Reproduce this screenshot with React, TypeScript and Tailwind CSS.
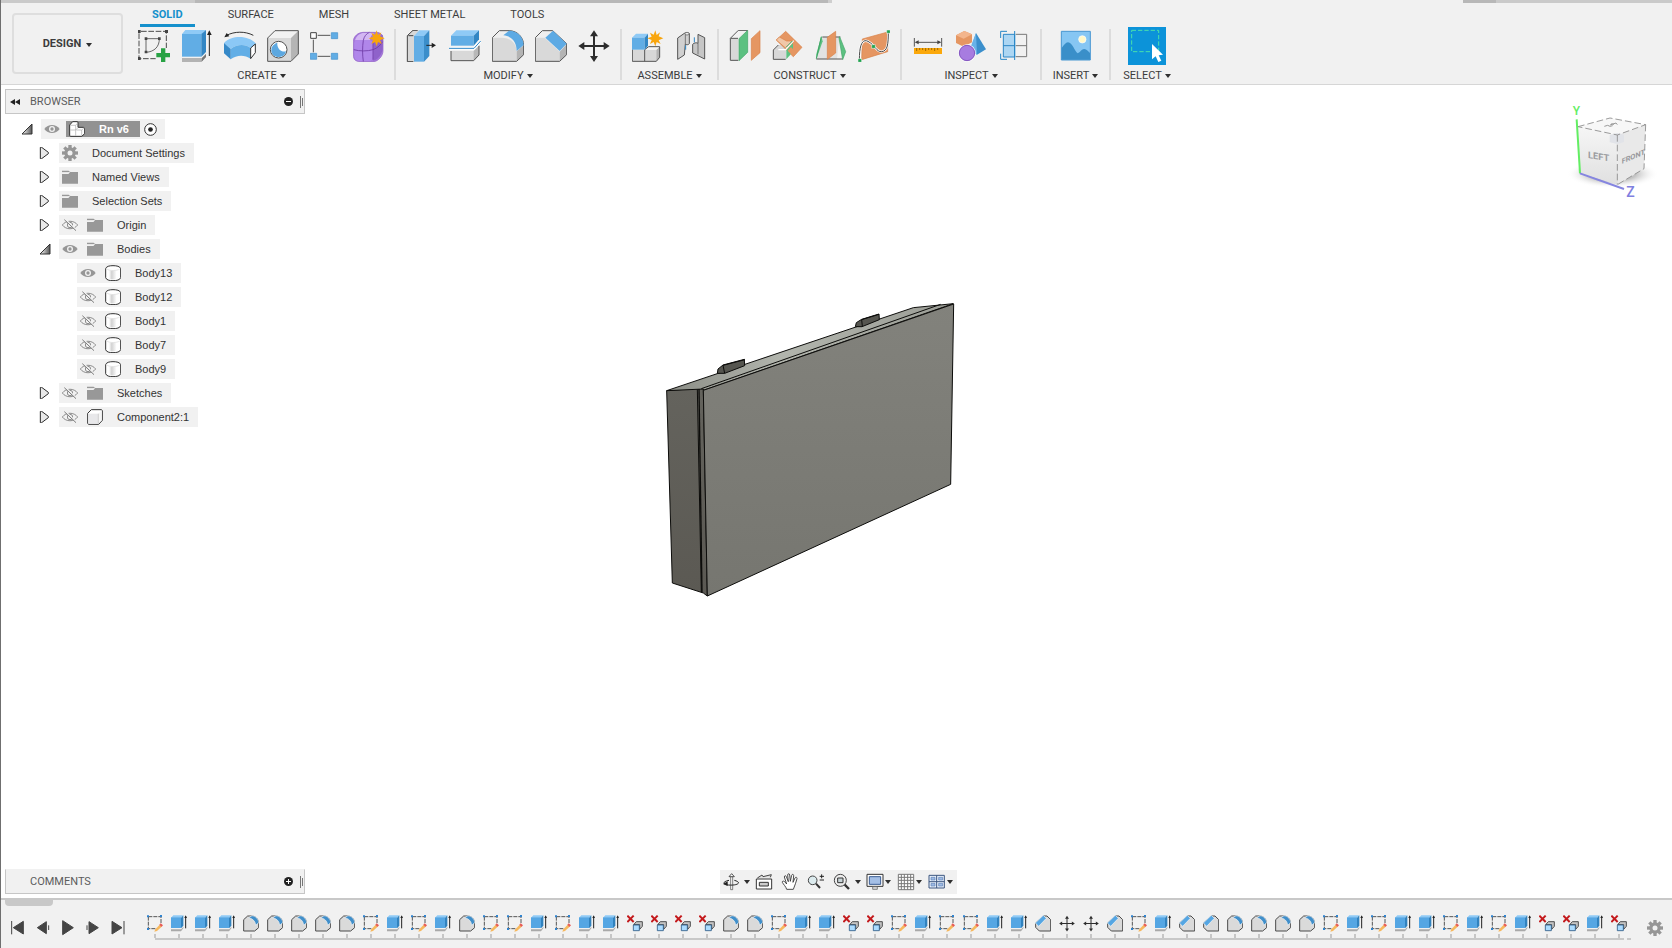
import React from 'react';

type IconProps = { children: React.ReactNode; box: string; className?: string };

function Drawing({ children, box, className = 'h-8 w-8' }: IconProps) {
  return (
    <svg viewBox={box} className={`block shrink-0 ${className}`} fill="none" aria-hidden="true">
      {children}
    </svg>
  );
}

function Caret() {
  return (
    <svg viewBox="0 0 6 4" className="block h-1 w-1.5 shrink-0" aria-hidden="true">
      <path d="M0 0h6L3 4z" fill="#2f2f2f" />
    </svg>
  );
}

const STAR = 'M0-24 4-10 14-18 10-6 24 0 10 6 16 17 4 11 0 24-5 11-16 17-11 5-24 0-11-5-16-17-5-11z';

/* ---------- ribbon icons ---------- */

const SketchIcon = () => (
  <Drawing box="414 90 96 96">
    <path d="M417 94h82v50M417 94v82h50" stroke="#4a4a4a" strokeWidth="3" strokeDasharray="17 5" strokeDashoffset="-6" />
    <path d="M438 157V116h40c0 24-14 39-40 41" stroke="#4a4a4a" strokeWidth="2.5" />
    <path d="M413 90h9v9h-9zM495 90h9v9h-9zM413 171h9v9h-9zM434 112h8v8h-8zM474 112h8v8h-8zM434 152h8v8h-8z" fill="#444" />
    <path d="M483 145h13v14h14v13h-14v14h-13v-14h-14v-13h14z" fill="#27a243" />
  </Drawing>
);

const ExtrudeIcon = () => (
  <Drawing box="543 90 96 96">
    <path d="M546 102 556 90h62l-13 12z" fill="#8fcaf6" />
    <path d="M546 102h58v68h-58z" fill="#61ade5" />
    <path d="M604 102l14-12v66l-14 14z" fill="#3286c4" />
    <path d="M546 174h60l12-12v9l-14 15h-58z" fill="#b3b3b3" />
    <path d="M606 174l12-12v9l-13 14z" fill="#777" />
    <path d="M628 168V100" stroke="#222" strokeWidth="3" />
    <path d="M621 105l7-14 7 14z" fill="#222" />
  </Drawing>
);

const RevolveIcon = () => (
  <Drawing box="672 90 96 96">
    <path d="M672 129C695 105 745 105 768 131L752 144C737 132 710 132 692 147z" fill="#8bc8f6" />
    <path d="M692 147c18-15 45-15 60-3v32c-18-12-42-12-60 2z" fill="#62aee6" />
    <path d="M672 129l20 18v31l-20-18z" fill="#3689c8" />
    <path d="M752 144l14-12v26l-14 18z" fill="#fff" stroke="#333" strokeWidth="3" />
    <path d="M760 106C735 93 703 94 680 106" stroke="#333" strokeWidth="3" />
    <path d="M673 112l7-13 8 10z" fill="#222" />
  </Drawing>
);

const HoleIcon = () => (
  <Drawing box="801 90 96 96">
    <path d="M803 114l22-22h70l-22 22z" fill="#f2f2f2" />
    <path d="M803 114h70v70h-70z" fill="#d9d9d9" />
    <path d="M873 114l22-22v70l-22 22z" fill="#b5b5b5" />
    <path d="M803 114l22-22h70v70l-22 22h-70z" stroke="#555" strokeWidth="3" />
    <circle cx="836" cy="149" r="25" fill="#fff" stroke="#505050" strokeWidth="3" />
    <path d="M832 128c-26 8-23 43 5 43 14 0 20-10 21-17-13 4-28-8-26-26z" fill="#5da8e0" />
  </Drawing>
);

const PatternIcon = () => (
  <Drawing box="930 90 96 96">
    <path d="M953 106h38M940 119v38M953 169h38" stroke="#555" strokeWidth="3" />
    <path d="M932 98h17v17h-17z" fill="#fff" stroke="#444" strokeWidth="3" />
    <path d="M994 98h19v18h-19zM931 160h19v18h-19zM994 160h19v18h-19z" fill="#61ade5" stroke="#4290cb" strokeWidth="2" />
  </Drawing>
);

const FormIcon = () => (
  <Drawing box="1059 90 96 96">
    <path d="M1060 124c0-14 14-27 30-27h38c14 0 21 8 21 20v36c0 14-14 32-30 32h-38c-14 0-21-7-21-20z" fill="#a679dd" />
    <path d="M1066 118c5-12 14-19 26-19h30c-8 6-12 13-12 22h-45z" fill="#d3b7f2" />
    <path d="M1120 122l28-18v42c-2 18-14 32-28 36z" fill="#8f62ca" />
    <path d="M1063 130c0-6 4-9 10-9h36c6 0 10 4 10 10v40c0 7-4 12-11 12h-33c-8 0-12-4-12-12z" fill="#b086ea" />
    <path d="M1061 149c18 5 42 5 58 0 14-5 23-14 29-24M1090 121c-3 20-3 42 0 64M1090 121c2-11 9-20 18-24M1119 125v54" stroke="#6d3aa5" strokeWidth="2.5" />
    <path d="M1060 124c0-14 14-27 30-27h38c14 0 21 8 21 20v36c0 14-14 32-30 32h-38c-14 0-21-7-21-20z" stroke="#9160c6" strokeWidth="2" />
    <path d={STAR} transform="translate(1130 115)" fill="#f8a50d" />
  </Drawing>
);

const PressPullIcon = () => (
  <Drawing box="51 90 96 96">
    <path d="M55 107l17-16h22L77 107v78H55z" fill="#d8d8d8" />
    <path d="M86 91H72L55 107v78h18M58 107h15" stroke="#444" strokeWidth="3" />
    <path d="M75 108l16-17h30l-16 17z" fill="#8fcaf6" />
    <path d="M75 108h30v77H75z" fill="#61ade5" />
    <path d="M105 108l16-17v77l-16 17z" fill="#3b8eca" />
    <path d="M112 136h20" stroke="#222" strokeWidth="3" />
    <path d="M128 128l13 8-13 8z" fill="#222" />
  </Drawing>
);

const SplitIcon = () => (
  <Drawing box="180 90 96 96">
    <path d="M186 107l16-16h68l-16 16z" fill="#8fcaf6" />
    <path d="M186 107h68v30h-68z" fill="#61ade5" />
    <path d="M254 107l16-16v27l-16 19z" fill="#3286c4" />
    <path d="M186 153h68l16-16v28l-16 17h-68z" fill="#d8d8d8" />
    <path d="M254 153l16-16v28l-16 17z" fill="#b8b8b8" />
    <path d="M186 153v29h68l16-17v-28" stroke="#555" strokeWidth="3" />
    <path d="M181 145h74l20-22" stroke="#fff" strokeWidth="9" />
    <path d="M180 145h75l20-22" stroke="#2d86c6" strokeWidth="3" />
  </Drawing>
);

const FilletIcon = () => (
  <Drawing box="309 90 96 96">
    <path d="M310 113l21-21h29c26 0 44 21 44 44v28l-21 20h-73z" fill="#efefef" />
    <path d="M310 113h29c26 0 44 18 44 41v30h-73z" fill="#d9d9d9" />
    <path d="M383 154l21-18v28l-21 20z" fill="#b4b4b4" />
    <path d="M310 113l21-21h29c26 0 44 21 44 44v28l-21 20h-73z" stroke="#555" strokeWidth="3" />
    <path d="M343 106l17-14c28 0 44 22 44 43l-21 18c0-26-13-44-40-47z" fill="#5daae4" />
  </Drawing>
);

const ChamferIcon = () => (
  <Drawing box="438 90 96 96">
    <path d="M439 113l21-21h31l42 39v33l-21 20h-73z" fill="#efefef" />
    <path d="M439 113h28l45 42v29h-73z" fill="#d9d9d9" />
    <path d="M512 155l21-22v31l-21 20z" fill="#b4b4b4" />
    <path d="M439 113l21-21h31l42 39v33l-21 20h-73z" stroke="#555" strokeWidth="3" />
    <path d="M469 113l23-21 41 39-21 22z" fill="#5daae4" />
  </Drawing>
);

function MoveIcon({ className = 'h-8 w-8' }: { className?: string }) {
  return (
    <Drawing box="567 90 96 96" className={className}>
      <path d="M615 105v68M581 138h68" stroke="#2c2c2c" strokeWidth="6" />
      <path d="M603 109l12-18 12 18zM603 168l12 18 12-18zM586 126l-18 12 18 12zM644 126l18 12-18 12z" fill="#2c2c2c" />
    </Drawing>
  );
}

const NewComponentIcon = () => (
  <Drawing box="729 90 96 96">
    <path d="M730 149h36v35h-36zM768 149h34v35h-34z" fill="#d8d8d8" />
    <path d="M802 149l10-10v33l-10 12z" fill="#b4b4b4" />
    <path d="M768 149l10-9h34l-10 9z" fill="#f4f4f4" />
    <path d="M730 148v36h72l10-12v-32h-33l-12 9v35" stroke="#555" strokeWidth="3" />
    <path d="M729 113l12-12h36l-10 12z" fill="#8fcaf6" />
    <path d="M729 113h38v36h-38z" fill="#61ade5" />
    <path d="M767 113l10-12v36l-10 12z" fill="#3286c4" />
    <path d={STAR} transform="translate(799 115)" fill="#f8a50d" />
  </Drawing>
);

const JointIcon = () => (
  <Drawing box="858 90 96 96">
    <path d="M866 114l20-14c6-4 15-3 15 2v29c-3 4-9 4-12 1l-3 33-20 13z" fill="#d0d0d0" stroke="#555" strokeWidth="3" />
    <path d="M889 101v31" stroke="#777" strokeWidth="3" />
    <ellipse cx="894" cy="101" rx="6" ry="4" fill="#eee" stroke="#555" strokeWidth="2" />
    <path d="M947 113l-20-10v27c-4-3-12-2-16 3v26l36 18z" fill="#c6c6c6" stroke="#555" strokeWidth="3" />
    <path d="M927 130v33" stroke="#777" strokeWidth="3" />
    <path d="M890 149v-13M916 127v-15" stroke="#2d86c6" strokeWidth="3" />
  </Drawing>
);

const OffsetPlaneIcon = () => (
  <Drawing box="1020 90 96 96">
    <path d="M1024 115h24v66h-24z" fill="#d8d8d8" />
    <path d="M1024 115l24-24h26l-24 24z" fill="#f1f1f1" />
    <path d="M1048 181h-24v-66l24-24h28M1025 115h22" stroke="#555" strokeWidth="3" />
    <path d="M1050 116l26-25v66l-26 25z" fill="#5cc181" stroke="#3fa565" strokeWidth="2" />
    <path d="M1087 116l26-24v66l-26 23z" fill="#e59662" stroke="#d98047" strokeWidth="2" />
  </Drawing>
);

const AnglePlaneIcon = () => (
  <Drawing box="-21 90 96 96">
    <path d="M-17 150l16-15h22v43h-38z" fill="#d8d8d8" />
    <path d="M20 178h-37v-28l15-15" stroke="#555" strokeWidth="3" />
    <path d="M20 94l49 48-26 28-51-50z" fill="#e59662" stroke="#d98047" strokeWidth="2" />
    <path d="M-8 120l9-9 22 12h19l-20 23z" fill="#f0c7a8" stroke="#d98047" strokeWidth="2" />
    <path d="M22 150l20-21v26l-20 23z" fill="#5cc181" />
    <path d="M-2 149h22l24-27" stroke="#fff" strokeWidth="4" />
    <path d="M21 142l19-19" stroke="#3fa565" strokeWidth="3" />
    <path d="M26 152l17 18 10-11-17-18z" fill="#e59662" />
  </Drawing>
);

const MidPlaneIcon = () => (
  <Drawing box="108 90 96 96">
    <path d="M125 111h56l-7 66h-62z" fill="#e2e2e2" />
    <path d="M130 111h54M112 177h78" stroke="#555" strokeWidth="3" />
    <path d="M127 109l-15 53v16l19-54z" fill="#5cc181" />
    <path d="M127 110l-15 66" stroke="#3fa565" strokeWidth="3" />
    <path d="M182 110l18 45-9 24-11-65z" fill="#5cc181" stroke="#3fa565" strokeWidth="2" />
    <path d="M145 112l25-18v65l-25 19z" fill="#e59662" stroke="#d98047" strokeWidth="2" />
  </Drawing>
);

const TangentPlaneIcon = () => (
  <Drawing box="237 90 96 96">
    <path d="M250 117l76-21v59l-78 24z" fill="#e59662" stroke="#d98047" strokeWidth="2" />
    <path d="M241 181c0-54 12-64 26-57 22 12 25 32 41 31 18-2 20-23 20-60" stroke="#fff" strokeWidth="7" />
    <path d="M241 181c0-54 12-64 26-57 22 12 25 32 41 31 18-2 20-23 20-60" stroke="#4a4a4a" strokeWidth="3" />
    <path d="M237 176h11v11h-11zM278 134h11v11h-11zM323 90h11v10h-11z" fill="#21a350" stroke="#fff" strokeWidth="1.5" />
  </Drawing>
);

const MeasureIcon = () => (
  <Drawing box="399 90 96 96">
    <path d="M406 114v26M488 114v26M412 127h70" stroke="#555" strokeWidth="3" />
    <path d="M407 127l12-6v12zM487 127l-12-6v12z" fill="#444" />
    <path d="M405 144h84v18h-84z" fill="#fba80b" />
    <path d="M413 144v9M422 144v6M431 144v6M440 144v9M449 144v6M458 144v6M467 144v9M476 144v6" stroke="#8d5d00" strokeWidth="2.5" />
  </Drawing>
);

const InterferenceIcon = () => (
  <Drawing box="528 90 96 96">
    <path d="M531 106l25-13 23 10v24l-25 13-23-11z" fill="#e59662" />
    <path d="M531 106l25-13 23 10-25 13z" fill="#f3b58c" />
    <path d="M591 99l30 49-27 16-20-14z" fill="#3b8fcc" />
    <path d="M591 99l3 65-23-13z" fill="#68b2e8" />
    <circle cx="564" cy="159" r="26" fill="#fff" />
    <circle cx="564" cy="159" r="23" fill="#a77ce0" stroke="#8355c0" strokeWidth="3" />
  </Drawing>
);

const SectionIcon = () => (
  <Drawing box="657 90 96 96">
    <path d="M673 103h34v68h-34z" fill="#acd6f3" stroke="#2d86c6" strokeWidth="3" />
    <path d="M673 137h34" stroke="#2d86c6" strokeWidth="3" />
    <path d="M710 103h33v67h-33M710 137h33" stroke="#777" strokeWidth="3" />
    <path d="M684 94h-19v20M665 161v17h19M707 93v87" stroke="#2586c8" strokeWidth="3" />
  </Drawing>
);

const InsertIcon = () => (
  <Drawing box="839 90 96 96">
    <path d="M843 94h87v86h-87z" fill="#86c6f3" stroke="#4897d2" strokeWidth="3" />
    <path d="M844 144c6-7 12-17 19-17 13 0 20 28 29 33 8-4 13-14 20-13 7 0 12 8 17 12v20h-85z" fill="#3a8fc9" />
    <circle cx="906" cy="118" r="11" fill="#fff8c9" stroke="#fff" strokeWidth="2" />
  </Drawing>
);

const SelectIcon = () => (
  <Drawing box="1047 81 114 114" className="h-[38px] w-[38px] bg-[#0c93d9]">
    <path d="M1058 91h81v64h-81z" stroke="#4ae0ac" strokeWidth="3" strokeDasharray="13 6" />
    <path d="M1119 132v46l11-9 8 17 9-4-8-16 13-2z" fill="#fff" />
  </Drawing>
);

/* ---------- timeline icons ---------- */

const tl = 'h-[17px] w-4';
const features: Record<string, React.ReactNode> = {
  S: (
    <Drawing box="0 0 48 51" className={tl}>
      <path d="M4 5h38v19M4 5v36h22" stroke="#555" strokeWidth="3" strokeDasharray="12 3" />
      <path d="M0 1h6v6H0zM39 0h6v6h-6zM0 39h6v6H0z" fill="#2f83cf" />
      <path d="M25 43l13-14 6 6-14 13-8 2z" fill="#f6b85e" />
      <path d="M37 29l4-4 7 6-5 5z" fill="#e85c55" />
    </Drawing>
  ),
  E: (
    <Drawing box="0 0 48 51" className={tl}>
      <path d="M0 8l7-7h29l-6 7z" fill="#8fcaf6" />
      <path d="M0 7h30v32H0z" fill="#55a6e3" />
      <path d="M30 8l7-7v31l-7 8z" fill="#3182be" />
      <path d="M0 43h31l6-8v5l-7 9H0z" fill="#a9a9a9" />
      <path d="M44 40V4" stroke="#222" strokeWidth="3" />
      <path d="M40 9l4-8 4 8z" fill="#222" />
    </Drawing>
  ),
  F: (
    <Drawing box="0 0 48 51" className={tl}>
      <path d="M2 14L14 3h13c13 1 20 12 20 22v13L35 48H2z" fill="#dadada" stroke="#4b4b4b" strokeWidth="3" />
      <path d="M17 8l10-6c13 1 20 12 20 21l-9 8C37 18 29 11 17 8z" fill="#418fca" stroke="#f4f4f4" strokeWidth="2" />
    </Drawing>
  ),
  C: (
    <Drawing box="0 0 48 51" className={tl}>
      <path d="M2 24L25 3h11l11 11v34H13L2 37z" fill="#dadada" stroke="#4b4b4b" strokeWidth="3" />
      <path d="M1 24L25 1l9 9-23 24z" fill="#55a6e3" stroke="#f4f4f4" strokeWidth="2" />
    </Drawing>
  ),
  M: <MoveIcon className={tl} />,
  X: (
    <Drawing box="0 0 48 51" className={tl}>
      <path d="M1 2l19 19M20 2L1 21" stroke="#c3191c" strokeWidth="6" />
      <path d="M28 20h18v14l-8 9V29H20z" fill="#c4c4c4" stroke="#333" strokeWidth="2.5" />
      <path d="M19 30h18v17H19z" fill="#acdcff" stroke="#2c5a85" strokeWidth="2.5" />
    </Drawing>
  ),
};

const featureNames: Record<string, string> = {
  S: 'Sketch', E: 'Extrude', F: 'Fillet', C: 'Chamfer', M: 'Move', X: 'Remove',
};

const history = 'SEEEFFFFFSESEFSSESEEXXXXFFSEEXXSESSEECMMCSECCFFFFSESEESESEXXEX'.split('');

/* ---------- ribbon data ---------- */

type Group = { name: string; tools: { name: string; icon: React.ReactNode }[]; width?: string };

const groups: Group[] = [
  {
    name: 'CREATE',
    tools: [
      { name: 'Create Sketch', icon: <SketchIcon /> },
      { name: 'Extrude', icon: <ExtrudeIcon /> },
      { name: 'Revolve', icon: <RevolveIcon /> },
      { name: 'Hole', icon: <HoleIcon /> },
      { name: 'Rectangular Pattern', icon: <PatternIcon /> },
      { name: 'Create Form', icon: <FormIcon /> },
    ],
  },
  {
    name: 'MODIFY',
    tools: [
      { name: 'Press Pull', icon: <PressPullIcon /> },
      { name: 'Split Body', icon: <SplitIcon /> },
      { name: 'Fillet', icon: <FilletIcon /> },
      { name: 'Chamfer', icon: <ChamferIcon /> },
      { name: 'Move', icon: <MoveIcon /> },
    ],
  },
  {
    name: 'ASSEMBLE',
    tools: [
      { name: 'New Component', icon: <NewComponentIcon /> },
      { name: 'Joint', icon: <JointIcon /> },
    ],
  },
  {
    name: 'CONSTRUCT',
    tools: [
      { name: 'Offset Plane', icon: <OffsetPlaneIcon /> },
      { name: 'Plane at Angle', icon: <AnglePlaneIcon /> },
      { name: 'Midplane', icon: <MidPlaneIcon /> },
      { name: 'Tangent Plane', icon: <TangentPlaneIcon /> },
    ],
  },
  {
    name: 'INSPECT',
    tools: [
      { name: 'Measure', icon: <MeasureIcon /> },
      { name: 'Interference', icon: <InterferenceIcon /> },
      { name: 'Section Analysis', icon: <SectionIcon /> },
    ],
  },
  { name: 'INSERT', width: 'w-[47px]', tools: [{ name: 'Insert Image', icon: <InsertIcon /> }] },
  { name: 'SELECT', width: 'w-[52px]', tools: [{ name: 'Select', icon: <SelectIcon /> }] },
];

const tabs = ['SOLID', 'SURFACE', 'MESH', 'SHEET METAL', 'TOOLS'];

function Ribbon() {
  return (
    <header className="border-b border-[#d6d6d6] bg-[#f1f1f1] font-['Roboto','Liberation_Sans',sans-serif] text-[11px] text-[#3c3c3c]">
      <div className="flex h-[3px]">
        <div className="w-[194px] bg-[#cacaca]" />
        <div className="w-[633px] bg-[#b8b8b8]" />
        <div className="w-1 bg-[#cecece]" />
        <div className="flex-1" />
        <div className="w-[33px] bg-[#b8b8b8]" />
        <div className="w-[176px] bg-[#cacaca]" />
      </div>
      <div className="flex">
        <button className="mt-2.5 ml-[11px] flex h-[61px] w-[111px] shrink-0 items-center justify-center gap-[5px] rounded border-2 border-[#dedede] pt-0.5 font-bold">
          DESIGN
          <Caret />
        </button>
        <div className="ml-[15px]">
          <nav className="ml-0.5 flex gap-[21px]">
            {tabs.map((tab, i) => (
              <button
                key={tab}
                className={`h-6 border-b-[3px] px-3 pt-0.5 leading-[19px] whitespace-nowrap ${
                  i === 0 ? 'border-[#1590cc] font-bold text-[#1590cc]' : 'border-transparent'
                }`}
              >
                {tab}
              </button>
            ))}
          </nav>
          <div className="flex">
            {groups.map((g, i) => (
              <React.Fragment key={g.name}>
                {i > 0 && <div className="mt-0.5 h-[51px] w-0.5 bg-[#dcdcdc]" />}
                <section className={i === 0 ? 'pr-[9px]' : 'px-2.5'}>
                  <div className={g.width ?? 'w-auto'}>
                    <div className="flex h-[38px] items-center justify-center gap-[11px]">
                      {g.tools.map((t) => (
                        <button key={t.name} aria-label={t.name}>
                          {t.icon}
                        </button>
                      ))}
                    </div>
                    <button className="mx-auto flex h-[19px] items-center gap-[3px] pt-0.5 leading-4">
                      {g.name}
                      <Caret />
                    </button>
                  </div>
                </section>
              </React.Fragment>
            ))}
          </div>
        </div>
      </div>
    </header>
  );
}

/* ---------- browser tree ---------- */

function Eye({ open }: { open: boolean }) {
  return open ? (
    <Drawing box="0 0 48 48" className="h-4 w-4">
      <path d="M1 24C12 8 36 8 47 24 36 40 12 40 1 24z" fill="#969696" />
      <circle cx="24" cy="24" r="9" fill="#f1f1f1" />
      <circle cx="24" cy="24" r="5" fill="#969696" />
    </Drawing>
  ) : (
    <Drawing box="0 0 48 48" className="h-4 w-4">
      <path d="M1 24C12 9 36 9 47 24 36 39 12 39 1 24z" stroke="#8d8d8d" strokeWidth="3" />
      <circle cx="24" cy="24" r="8" stroke="#8d8d8d" strokeWidth="3" />
      <path d="M10 7l34 33" stroke="#f1f1f1" strokeWidth="4" />
      <path d="M7 8l35 33" stroke="#7d7d7d" strokeWidth="3" />
    </Drawing>
  );
}

const FolderIcon = () => (
  <Drawing box="0 0 48 48" className="h-4 w-4">
    <path d="M0 5h20l5 4H48v35H0V15h19l5-5H0z" fill="#989898" />
    <path d="M0 12h19l4-4" stroke="#f1f1f1" strokeWidth="3" />
  </Drawing>
);

function GearIcon({ hole }: { hole: string }) {
  return (
    <Drawing box="-24 -24 48 48" className="h-4 w-4">
      {[0, 45, 90, 135].map((a) => (
        <path key={a} d="M-5-24H5V24H-5z" transform={`rotate(${a})`} fill="#969696" />
      ))}
      <circle r="17" fill="#969696" />
      <circle r="7.5" fill={hole} />
    </Drawing>
  );
}

const BodyIcon = () => (
  <Drawing box="0 0 48 48" className="h-4 w-4">
    <defs>
      <linearGradient id="cyl">
        <stop offset="0" stopColor="#fff" />
        <stop offset=".35" stopColor="#d2d2d2" />
        <stop offset="1" stopColor="#fff" />
      </linearGradient>
    </defs>
    <path d="M2 11C4 4 13 2 24 2s21 2 23 9v27c-2 7-12 9-23 9S4 45 2 38z" fill="#fff" stroke="#333" strokeWidth="3" />
    <path d="M12 17h23v26H12z" fill="url(#cyl)" />
    <path d="M5 12c8 6 31 6 39 0" stroke="#d8d8d8" strokeWidth="2" />
  </Drawing>
);

const ComponentIcon = () => (
  <Drawing box="0 0 48 48" className="h-4 w-4">
    <path d="M2 13L13 2h29c3 0 4 2 4 4v28L35 46H6c-3 0-4-2-4-4z" fill="#fff" stroke="#333" strokeWidth="3" />
    <path d="M4 14h30v30H4z" fill="#e8e8ea" />
    <path d="M34 14L44 4v29L34 44z" fill="#f6f6f6" />
    <path d="M34 14v30" stroke="#bbb" strokeWidth="2" />
  </Drawing>
);

const AssemblyIcon = () => (
  <Drawing box="0 0 48 48" className="h-4 w-4">
    <path d="M2 12L11 2h13c2 0 3 1 3 3v14h16c2 0 4 2 4 4v15l-9 8H5c-2 0-3-1-3-3z" fill="#fff" stroke="#333" strokeWidth="3" />
    <path d="M4 27h16v17M20 27l7-7M20 13v14M4 13h16l6-7M38 27v17M22 27h16l7-6" stroke="#aaa" strokeWidth="2" />
  </Drawing>
);

function Expander({ open }: { open: boolean }) {
  return open ? (
    <Drawing box="0 0 36 36" className="h-3 w-3">
      <defs>
        <linearGradient id="tri">
          <stop offset=".1" stopColor="#eee" />
          <stop offset="1" stopColor="#555" />
        </linearGradient>
      </defs>
      <path d="M3 33L33 3v30z" fill="url(#tri)" stroke="#333" strokeWidth="3" />
    </Drawing>
  ) : (
    <Drawing box="0 0 36 36" className="h-3 w-3">
      <path d="M4 1h4l20 15v4L8 35H4z" fill="#e9e9e9" stroke="#2a2a2a" strokeWidth="3" />
    </Drawing>
  );
}

type Node = { label: string; depth: 1 | 2; icon: React.ReactNode; eye?: 'on' | 'off'; open?: boolean };

const nodes: Node[] = [
  { label: 'Document Settings', depth: 1, icon: <GearIcon hole="#f1f1f1" /> },
  { label: 'Named Views', depth: 1, icon: <FolderIcon /> },
  { label: 'Selection Sets', depth: 1, icon: <FolderIcon /> },
  { label: 'Origin', depth: 1, icon: <FolderIcon />, eye: 'off' },
  { label: 'Bodies', depth: 1, icon: <FolderIcon />, eye: 'on', open: true },
  { label: 'Body13', depth: 2, icon: <BodyIcon />, eye: 'on' },
  { label: 'Body12', depth: 2, icon: <BodyIcon />, eye: 'off' },
  { label: 'Body1', depth: 2, icon: <BodyIcon />, eye: 'off' },
  { label: 'Body7', depth: 2, icon: <BodyIcon />, eye: 'off' },
  { label: 'Body9', depth: 2, icon: <BodyIcon />, eye: 'off' },
  { label: 'Sketches', depth: 1, icon: <FolderIcon />, eye: 'off' },
  { label: 'Component2:1', depth: 1, icon: <ComponentIcon />, eye: 'off' },
];

function Tree() {
  return (
    <ul className="mt-[5px] flex flex-col gap-1 font-['Liberation_Sans',Arial,sans-serif] text-[11px] leading-5 text-[#333]">
      <li className="flex h-5 items-center pl-3">
        <button aria-label="Collapse Rn v6" className="flex w-6 pl-1">
          <Expander open />
        </button>
        <div className="flex h-5 items-center bg-[#f1f1f1] pr-2 pl-[3px]">
          <button aria-label="Toggle visibility">
            <Eye open />
          </button>
          <div className="ml-1.5 flex h-4 items-center bg-[#929292] pr-[11px] pl-[3px] font-bold text-white">
            <AssemblyIcon />
            <span className="ml-3.5">Rn v6</span>
          </div>
          <label className="ml-1 flex">
            <input type="radio" defaultChecked aria-label="Activate Rn v6" className="peer sr-only" />
            <Drawing box="0 0 39 39" className="h-[13px] w-[13px]">
              <circle cx="19.5" cy="19.5" r="17.5" fill="#fff" stroke="#333" strokeWidth="3" />
              <circle cx="19.5" cy="19.5" r="7" fill="#222" />
            </Drawing>
          </label>
        </div>
      </li>
      {nodes.map((n) => (
        <li key={n.label} className={`flex h-5 items-center ${n.depth === 1 ? 'pl-[30px]' : 'pl-12'}`}>
          {n.depth === 1 ? (
            <button aria-label={`Expand ${n.label}`} className="flex w-6 pl-1">
              <Expander open={!!n.open} />
            </button>
          ) : (
            <div className="w-6" />
          )}
          <div className="flex h-5 items-center bg-[#f1f1f1] pr-[9px] pl-[3px]">
            {n.eye && (
              <button aria-label={`Toggle ${n.label}`} className="mr-[9px]">
                <Eye open={n.eye === 'on'} />
              </button>
            )}
            {n.icon}
            <span className="ml-3.5 whitespace-nowrap">{n.label}</span>
          </div>
        </li>
      ))}
    </ul>
  );
}

function PanelBar({ title, sign }: { title: string; sign: 'minus' | 'plus' }) {
  const minus = sign === 'minus';
  return (
    <div
      className={`flex h-[25px] w-[300px] items-center border border-[#c6c6c6] bg-[#f1f1f1] font-['Roboto','Liberation_Sans',sans-serif] text-[11px] text-[#5c5c5c] ${
        minus ? '' : 'border-t-[#f1f1f1]'
      }`}
    >
      <div className="flex w-6 pl-1">
        {minus && (
          <button aria-label="Collapse panel">
            <Drawing box="0 0 30 18" className="h-1.5 w-2.5">
              <path d="M15 0v18L0 9zM30 0v18L15 9z" fill="#222" />
            </Drawing>
          </button>
        )}
      </div>
      <span className="flex-1 pt-0.5">{title}</span>
      <button aria-label={minus ? 'Minimize' : 'Expand'}>
        <Drawing box="0 0 27 27" className="h-[9px] w-[9px]">
          <circle cx="13.5" cy="13.5" r="13.5" fill="#222" />
          <path d={minus ? 'M6 13.5h15' : 'M6 13.5h15M13.5 6v15'} stroke="#fff" strokeWidth="3" />
        </Drawing>
      </button>
      <div className="mr-px ml-[7px] flex items-center gap-px">
        <div className="h-3 w-px bg-[#777]" />
        <div className="h-2 w-px bg-[#777]" />
      </div>
    </div>
  );
}

/* ---------- viewport ---------- */

function ViewCube() {
  return (
    <svg viewBox="0 0 396 360" className="block h-[120px] w-[132px]" fill="none" role="img" aria-label="View cube">
      <defs>
        <radialGradient id="shade">
          <stop offset=".5" stopColor="#a8a8a8" stopOpacity=".7" />
          <stop offset="1" stopColor="#fff" stopOpacity="0" />
        </radialGradient>
        <linearGradient id="leftFace" x2="0" y2="1">
          <stop offset="0" stopColor="#f6f6f6" />
          <stop offset="1" stopColor="#e0e0e0" />
        </linearGradient>
      </defs>
      <ellipse cx="218" cy="252" rx="138" ry="42" fill="url(#shade)" />
      <path d="M114 110l96-26 107 20-85 31z" fill="#f7f7f7" />
      <path d="M114 110l118 25v149l-112-34z" fill="url(#leftFace)" />
      <path d="M232 135l85-31-5 132-80 48z" fill="#e9e9e9" />
      <path d="M209 135l23-6 20 5v22l-20 6-23-5z" fill="#e1e3e8" />
      <path d="M114 110l96-26 107 20-85 31zM232 135v149M317 104l-5 132-80 48" stroke="#888" strokeWidth="2.5" strokeDasharray="20 9" />
      <path d="M193 109l10-3 7 3 8-2M210 105l18-6 4 5M214 101l8 2" stroke="#999" strokeWidth="3" />
      <path d="M110 88l10 162" stroke="#63ee63" strokeWidth="6" />
      <path d="M120 250l132 47" stroke="#8585e0" strokeWidth="6" />
      <g fontFamily="Roboto, sans-serif" fontWeight="700">
        <text transform="translate(144 204) skewY(9)" fontSize="28" fill="#9b9b9f">LEFT</text>
        <text transform="translate(245 222) skewY(-23)" fontSize="22" fill="#96969a">FRONT</text>
        <text x="98" y="76" fontSize="36" fontWeight="500" fill="#63ee63">Y</text>
        <text x="259" y="320" fontSize="42" fontWeight="500" fill="#8080df">Z</text>
      </g>
    </svg>
  );
}

function Model() {
  return (
    <svg viewBox="0 0 960 960" className="block h-80 w-80" fill="none" role="img" aria-label="Body13">
      <defs>
        <linearGradient id="front" x2="0" y2="1">
          <stop offset="0" stopColor="#82827c" />
          <stop offset="1" stopColor="#767670" />
        </linearGradient>
        <linearGradient id="side" x2="0" y2="1">
          <stop offset="0" stopColor="#64635d" />
          <stop offset="1" stopColor="#5b5953" />
        </linearGradient>
        <linearGradient id="top">
          <stop offset="0" stopColor="#8b8d86" />
          <stop offset=".4" stopColor="#b2b5ad" />
          <stop offset="1" stopColor="#9b9d96" />
        </linearGradient>
      </defs>
      <g stroke="#0c0c0a" strokeWidth="3" strokeLinejoin="round">
        <path d="M50 302L790 53l120-12L160 301z" fill="url(#top)" />
        <path d="M50 302l110-5 12 621-12-9-93-30z" fill="url(#side)" />
        <path d="M160 301L911 42l-9 541-730 335z" fill="url(#front)" />
        <path d="M142 298l12 608M154 296L872 43" />
        <path d="M147 297l9 611" strokeWidth="4" />
        <path d="M202 250l2-13 15-12 64-17 1 19-60 23z" fill="#55554f" />
        <path d="M219 226l5 24M219 226l66-17" />
        <path d="M616 110l3-12 16-10 52-16 1 17-52 21z" fill="#55554f" />
        <path d="M635 89l2 20M635 89l52-16" />
      </g>
    </svg>
  );
}

function NavBar() {
  const size = 'h-[18px] w-[18px]';
  return (
    <div className="flex h-6 items-center gap-[5px] bg-[#f1f1f1] pr-1 pl-0.5">
      <button aria-label="Orbit" className="flex items-center gap-1">
        <Drawing box="36 39 54 54" className={size}>
          <path d="M62 50h6v39h-6z" fill="#fff" stroke="#444" strokeWidth="2" />
          <path d="M57 50l8-9 8 9z" fill="#fff" stroke="#333" strokeWidth="2.5" />
          <path d="M57 61c-20 4-20 12-2 14 24 2 36-5 28-10-3-2-6-3-10-4" stroke="#222" strokeWidth="3" />
          <path d="M39 72l14-8v14z" fill="#222" />
        </Drawing>
        <Caret />
      </button>
      <div className="flex gap-2">
        <button aria-label="Look At">
          <Drawing box="135 39 54 54" className={size}>
            <path d="M139 57h46v30h-46z" fill="#fff" stroke="#333" strokeWidth="3" />
            <path d="M148 67h27v11h-27z" fill="#ccc" stroke="#333" strokeWidth="3" />
            <path d="M142 54l14-9 3 5 25-6-3 8" stroke="#444" strokeWidth="3" fill="#ddd" />
          </Drawing>
        </button>
        <button aria-label="Pan">
          <Drawing box="213 39 54 54" className={size}>
            <path d="M230 88c-2-8-10-15-13-21-1-4 4-5 7-2l6 7-7-21c0-5 5-5 6-1l6 15-2-20c0-5 6-5 6 0l2 19 4-18c1-4 6-4 6 1l-2 20 6-13c2-4 7-2 6 2-3 10-6 20-11 32z" fill="#fff" stroke="#333" strokeWidth="2.6" />
          </Drawing>
        </button>
        <button aria-label="Zoom">
          <Drawing box="291 39 54 54" className={size}>
            <circle cx="308" cy="61" r="13" fill="#dcebee" stroke="#444" strokeWidth="3" />
            <path d="M318 71l12 13" stroke="#333" strokeWidth="6" />
            <path d="M329 49h13M335 43v12M329 60h13" stroke="#222" strokeWidth="3" />
          </Drawing>
        </button>
        <button aria-label="Fit" className="flex items-center gap-1">
          <Drawing box="369 39 54 54" className={size}>
            <circle cx="391" cy="61" r="18" fill="#eee" stroke="#444" strokeWidth="3" />
            <path d="M383 54h16v14h-16z" fill="#c8d4d8" stroke="#333" strokeWidth="3" />
            <path d="M404 74l13 13" stroke="#333" strokeWidth="7" />
          </Drawing>
          <Caret />
        </button>
      </div>
      <div className="flex gap-1.5">
        <button aria-label="Display Settings" className="flex items-center gap-px">
          <Drawing box="468 39 54 54" className={size}>
            <path d="M471 43h48v36h-48z" fill="#fff" stroke="#333" strokeWidth="3" />
            <path d="M478 50h34v23h-34z" fill="#a4bfe6" stroke="#3b5d92" strokeWidth="3" />
            <path d="M488 80h14v8h-14z" fill="#ddd" stroke="#555" strokeWidth="2" />
          </Drawing>
          <Caret />
        </button>
        <button aria-label="Grid and Snaps" className="flex items-center gap-px">
          <Drawing box="561 39 54 54" className={size}>
            <path d="M565 43h46v46h-46z" fill="#fff" />
            <path d="M565 43h46v46h-46zM574 43v46M583 43v46M593 43v46M602 43v46M565 52h46M565 61h46M565 71h46M565 80h46" stroke="#777" strokeWidth="3" />
          </Drawing>
          <Caret />
        </button>
        <button aria-label="Viewports" className="flex items-center gap-px">
          <Drawing box="654 39 54 54" className={size}>
            <path d="M657 46h46v38h-46z" fill="#e8f0fb" stroke="#3d5780" strokeWidth="3" />
            <path d="M680 46v38M657 65h46" stroke="#3d5780" strokeWidth="3" />
            <path d="M663 52h12v8h-12zM686 52h12v8h-12zM663 70h12v8h-12zM686 70h12v8h-12z" fill="#9fbbe4" stroke="#5f83b8" strokeWidth="2" />
          </Drawing>
          <Caret />
        </button>
      </div>
    </div>
  );
}

/* ---------- timeline ---------- */

const transport = [
  { name: 'Go to start', d: 'M5 3v40M40 4v38L10 23z' },
  { name: 'Step back', d: 'M34 5v36L7 23zM41 16v14' },
  { name: 'Play', d: 'M8 2v42L40 23z' },
  { name: 'Step forward', d: 'M12 5v36l28-18zM6 16v14' },
  { name: 'Go to end', d: 'M42 3v40M6 4v38l30-19z' },
];

function Timeline() {
  return (
    <footer className="relative flex h-[50px] items-start border-t-2 border-[#c8c8c8] bg-[#f1f1f1]">
      <div className="absolute top-0 left-1 h-1.5 w-12 rounded-b bg-[#c8c8c8]" />
      <div className="mt-5 ml-[9px] flex shrink-0 gap-[9px]">
        {transport.map((t) => (
          <button key={t.name} aria-label={t.name}>
            <Drawing box="0 0 48 48" className="h-4 w-4">
              <path d={t.d} fill="#444" stroke="#444" strokeWidth="3" />
            </Drawing>
          </button>
        ))}
      </div>
      <div className="mt-[15px] ml-[17px] min-w-0 overflow-hidden">
        <div className="w-fit">
          <ol className="flex">
            {history.map((f, i) => (
              <li key={i} className="flex w-6 shrink-0 flex-col items-center">
                <button aria-label={`${featureNames[f]} ${i + 1}`}>{features[f]}</button>
                <div className="mt-0.5 h-1 w-0.5 bg-[#c6c6c6]" />
              </li>
            ))}
          </ol>
          <div className="ml-3 flex gap-[3px]">
            <div className="h-0.5 flex-1 bg-[#c8c8c8]" />
            <div className="h-0.5 w-1 bg-[#c8c8c8]" />
          </div>
        </div>
      </div>
      <button aria-label="Timeline settings" className="mt-5 mr-[9px] ml-auto shrink-0">
        <GearIcon hole="#f1f1f1" />
      </button>
    </footer>
  );
}

export default function App() {
  return (
    <div className="flex min-h-screen flex-col overflow-x-hidden border-l border-[#6f6f6f] bg-white">
      <Ribbon />
      <main className="relative flex flex-1 flex-col justify-between pt-1 pb-1 pl-1">
        <div className="flex items-start justify-between">
          <aside aria-label="Browser">
            <PanelBar title="BROWSER" sign="minus" />
            <Tree />
          </aside>
          <div className="mt-px">
            <ViewCube />
          </div>
        </div>
        <div className="absolute top-[205px] left-1/2 -ml-[187px]">
          <Model />
        </div>
        <div className="grid grid-cols-[1fr_auto_1fr] items-center">
          <PanelBar title="COMMENTS" sign="plus" />
          <NavBar />
        </div>
      </main>
      <Timeline />
    </div>
  );
}
